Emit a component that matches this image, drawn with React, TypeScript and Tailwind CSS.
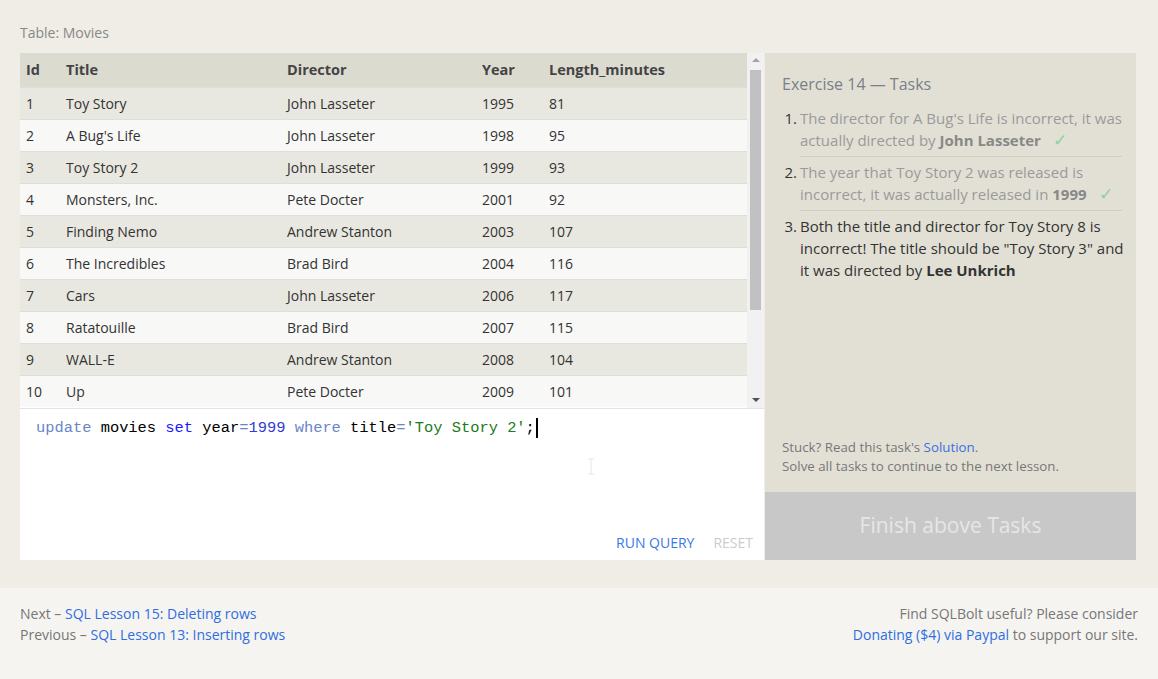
import { Fragment } from "react";

const movies = [
  { id: 1, title: "Toy Story", director: "John Lasseter", year: 1995, length: 81 },
  { id: 2, title: "A Bug's Life", director: "John Lasseter", year: 1998, length: 95 },
  { id: 3, title: "Toy Story 2", director: "John Lasseter", year: 1999, length: 93 },
  { id: 4, title: "Monsters, Inc.", director: "Pete Docter", year: 2001, length: 92 },
  { id: 5, title: "Finding Nemo", director: "Andrew Stanton", year: 2003, length: 107 },
  { id: 6, title: "The Incredibles", director: "Brad Bird", year: 2004, length: 116 },
  { id: 7, title: "Cars", director: "John Lasseter", year: 2006, length: 117 },
  { id: 8, title: "Ratatouille", director: "Brad Bird", year: 2007, length: 115 },
  { id: 9, title: "WALL-E", director: "Andrew Stanton", year: 2008, length: 104 },
  { id: 10, title: "Up", director: "Pete Docter", year: 2009, length: 101 },
];

const sans = "font-['Open_Sans','Noto_Sans',sans-serif]";

const Check = () => <span className="inline-block ml-3 text-[17px] leading-[22px] text-[#8fd19e]">✓</span>;

const Scrollbar = () => (
  <div className="w-[17px] bg-[#f1f1f1] flex flex-col items-center">
    <svg width="8" height="17" viewBox="0 0 8 17" className="shrink-0">
      <path d="M0 9 L4 5 L8 9 Z" fill="#a3a3a3" />
    </svg>
    <div className="w-[11px] h-[240px] bg-[#c1c1c1]" />
    <div className="flex-1" />
    <svg width="8" height="17" viewBox="0 0 8 17" className="shrink-0">
      <path d="M0 7 L8 7 L4 11 Z" fill="#505050" />
    </svg>
  </div>
);

export default function App() {
  return (
    <div className={`${sans} min-h-[679px] bg-[#f5f4f0]`}>
      <div className="bg-[#efede6] px-5 pt-[23px] pb-[28px]">
        <div className="text-[14px] leading-5 text-[#888] mb-[10px]">Table: Movies</div>
        <div className="flex w-[1116px]">
          {/* left: table + editor */}
          <div className="w-[744px] flex flex-col bg-white">
            <div className="flex h-[355px]">
              <table className="w-[727px] text-[14px] text-[#333] border-collapse self-start">
                <thead>
                  <tr className="bg-[#dcdbd0] h-[34px] text-left text-[14.5px] text-[#444]">
                    <th className="pl-[6px] w-[46px] font-bold">Id</th>
                    <th className="w-[221px] font-bold">Title</th>
                    <th className="w-[195px] font-bold">Director</th>
                    <th className="w-[67px] font-bold">Year</th>
                    <th className="font-bold">Length_minutes</th>
                  </tr>
                </thead>
                <tbody>
                  {movies.map((m, i) => (
                    <tr
                      key={m.id}
                      className={`h-[32px] border-t border-[#dedede] ${i % 2 === 0 ? "bg-[#e9e8e0]" : "bg-[#f8f8f7]"}`}
                    >
                      <td className="pl-[6px]">{m.id}</td>
                      <td>{m.title}</td>
                      <td>{m.director}</td>
                      <td>{m.year}</td>
                      <td>{m.length}</td>
                    </tr>
                  ))}
                </tbody>
              </table>
              <Scrollbar />
            </div>
            <div className="relative h-[152px] border-t border-[#e4e4e4] flex flex-col">
              <div className="font-['Liberation_Mono','DejaVu_Sans_Mono',monospace] text-[15.4px] leading-5 pl-[16px] pt-[9px] text-black flex items-center">
                <span className="text-[#6a86c8]">update</span>&nbsp;movies&nbsp;
                <span className="text-[#1a1aff]">set</span>&nbsp;year
                <span className="text-[#6a86c8]">=</span>
                <span className="text-[#2f3bd6]">1999</span>&nbsp;
                <span className="text-[#6a86c8]">where</span>&nbsp;title
                <span className="text-[#6a86c8]">=</span>
                <span className="text-[#1c7a1c]">'Toy Story 2'</span>;
                <span className="inline-block w-[2px] h-[20px] bg-black ml-[1px]" />
              </div>
              <svg width="8" height="17" viewBox="0 0 8 17" className="absolute left-[567px] top-[49px]">
                <path d="M1 1 H7 M4 1 V16 M1 16 H7" stroke="#e6e6e6" strokeWidth="1" fill="none" />
              </svg>
              <div className="flex-1" />
              <div className="flex justify-end gap-[19px] pr-[11px] pb-[7px] text-[14px] leading-5">
                <span className="text-[#3b78e7]">RUN QUERY</span>
                <span className="text-[#cccccc]">RESET</span>
              </div>
            </div>
          </div>

          {/* right: tasks */}
          <div className="ml-px w-[371px] flex flex-col bg-[#e2e0d5]">
            <div className="flex-1 flex flex-col pl-[17px] pr-[6px] pt-[20px]">
              <div className="text-[16px] leading-[22px] text-[#7a7f88] mb-[12px]">Exercise 14 — Tasks</div>
              <ol className="text-[15px] leading-[22px]">
                {[
                  {
                    done: true,
                    body: (
                      <>
                        The director for A Bug's Life is incorrect, it was actually directed by{" "}
                        <b className="text-[#888]">John Lasseter</b>
                        <Check />
                      </>
                    ),
                  },
                  {
                    done: true,
                    body: (
                      <>
                        The year that Toy Story 2 was released is incorrect, it was actually released in{" "}
                        <b className="text-[#888]">1999</b>
                        <Check />
                      </>
                    ),
                  },
                  {
                    done: false,
                    body: (
                      <>
                        Both the title and director for Toy Story 8 is incorrect! The title should be "Toy Story 3" and
                        it was directed by <b className="text-[#333]">Lee Unkrich</b>
                      </>
                    ),
                  },
                ].map((t, i) => (
                  <Fragment key={i}>
                    <li className={`${i > 0 ? "border-t border-[#d0cec3] ml-[18px] mr-[8px]" : "mr-[8px]"}`}>
                      <div className={`flex ${i > 0 ? "-ml-[18px] pt-[4px]" : ""} pb-[5px]`}>
                        <span className="w-[18px] shrink-0 text-[#333] text-right pr-[3px]">{i + 1}.</span>
                        <span className={`${t.done ? "text-[#9a9a9a]" : "text-[#333]"} ${i === 2 ? "-mr-[8px]" : ""}`}>
                          {t.body}
                        </span>
                      </div>
                    </li>
                  </Fragment>
                ))}
              </ol>
              <div className="flex-1" />
              <div className="text-[13.3px] leading-[19px] text-[#777] pb-[16px]">
                <div>
                  Stuck? Read this task's <span className="text-[#3b6fe0]">Solution</span>.
                </div>
                <div>Solve all tasks to continue to the next lesson.</div>
              </div>
            </div>
            <div className="h-[68px] bg-[#c8c8c8] flex items-center justify-center text-[21px] text-[#e6e6e6]">
              Finish above Tasks
            </div>
          </div>
        </div>
      </div>

      {/* footer */}
      <div className="flex justify-between px-5 pt-[15px] text-[14px] leading-[21px] text-[#777]">
        <div>
          <div>
            Next – <span className="text-[#2f6ee0]">SQL Lesson 15: Deleting rows</span>
          </div>
          <div>
            Previous – <span className="text-[#2f6ee0]">SQL Lesson 13: Inserting rows</span>
          </div>
        </div>
        <div className="text-right">
          <div>Find SQLBolt useful? Please consider</div>
          <div>
            <span className="text-[#2f6ee0]">Donating ($4) via Paypal</span> to support our site.
          </div>
        </div>
      </div>
    </div>
  );
}
